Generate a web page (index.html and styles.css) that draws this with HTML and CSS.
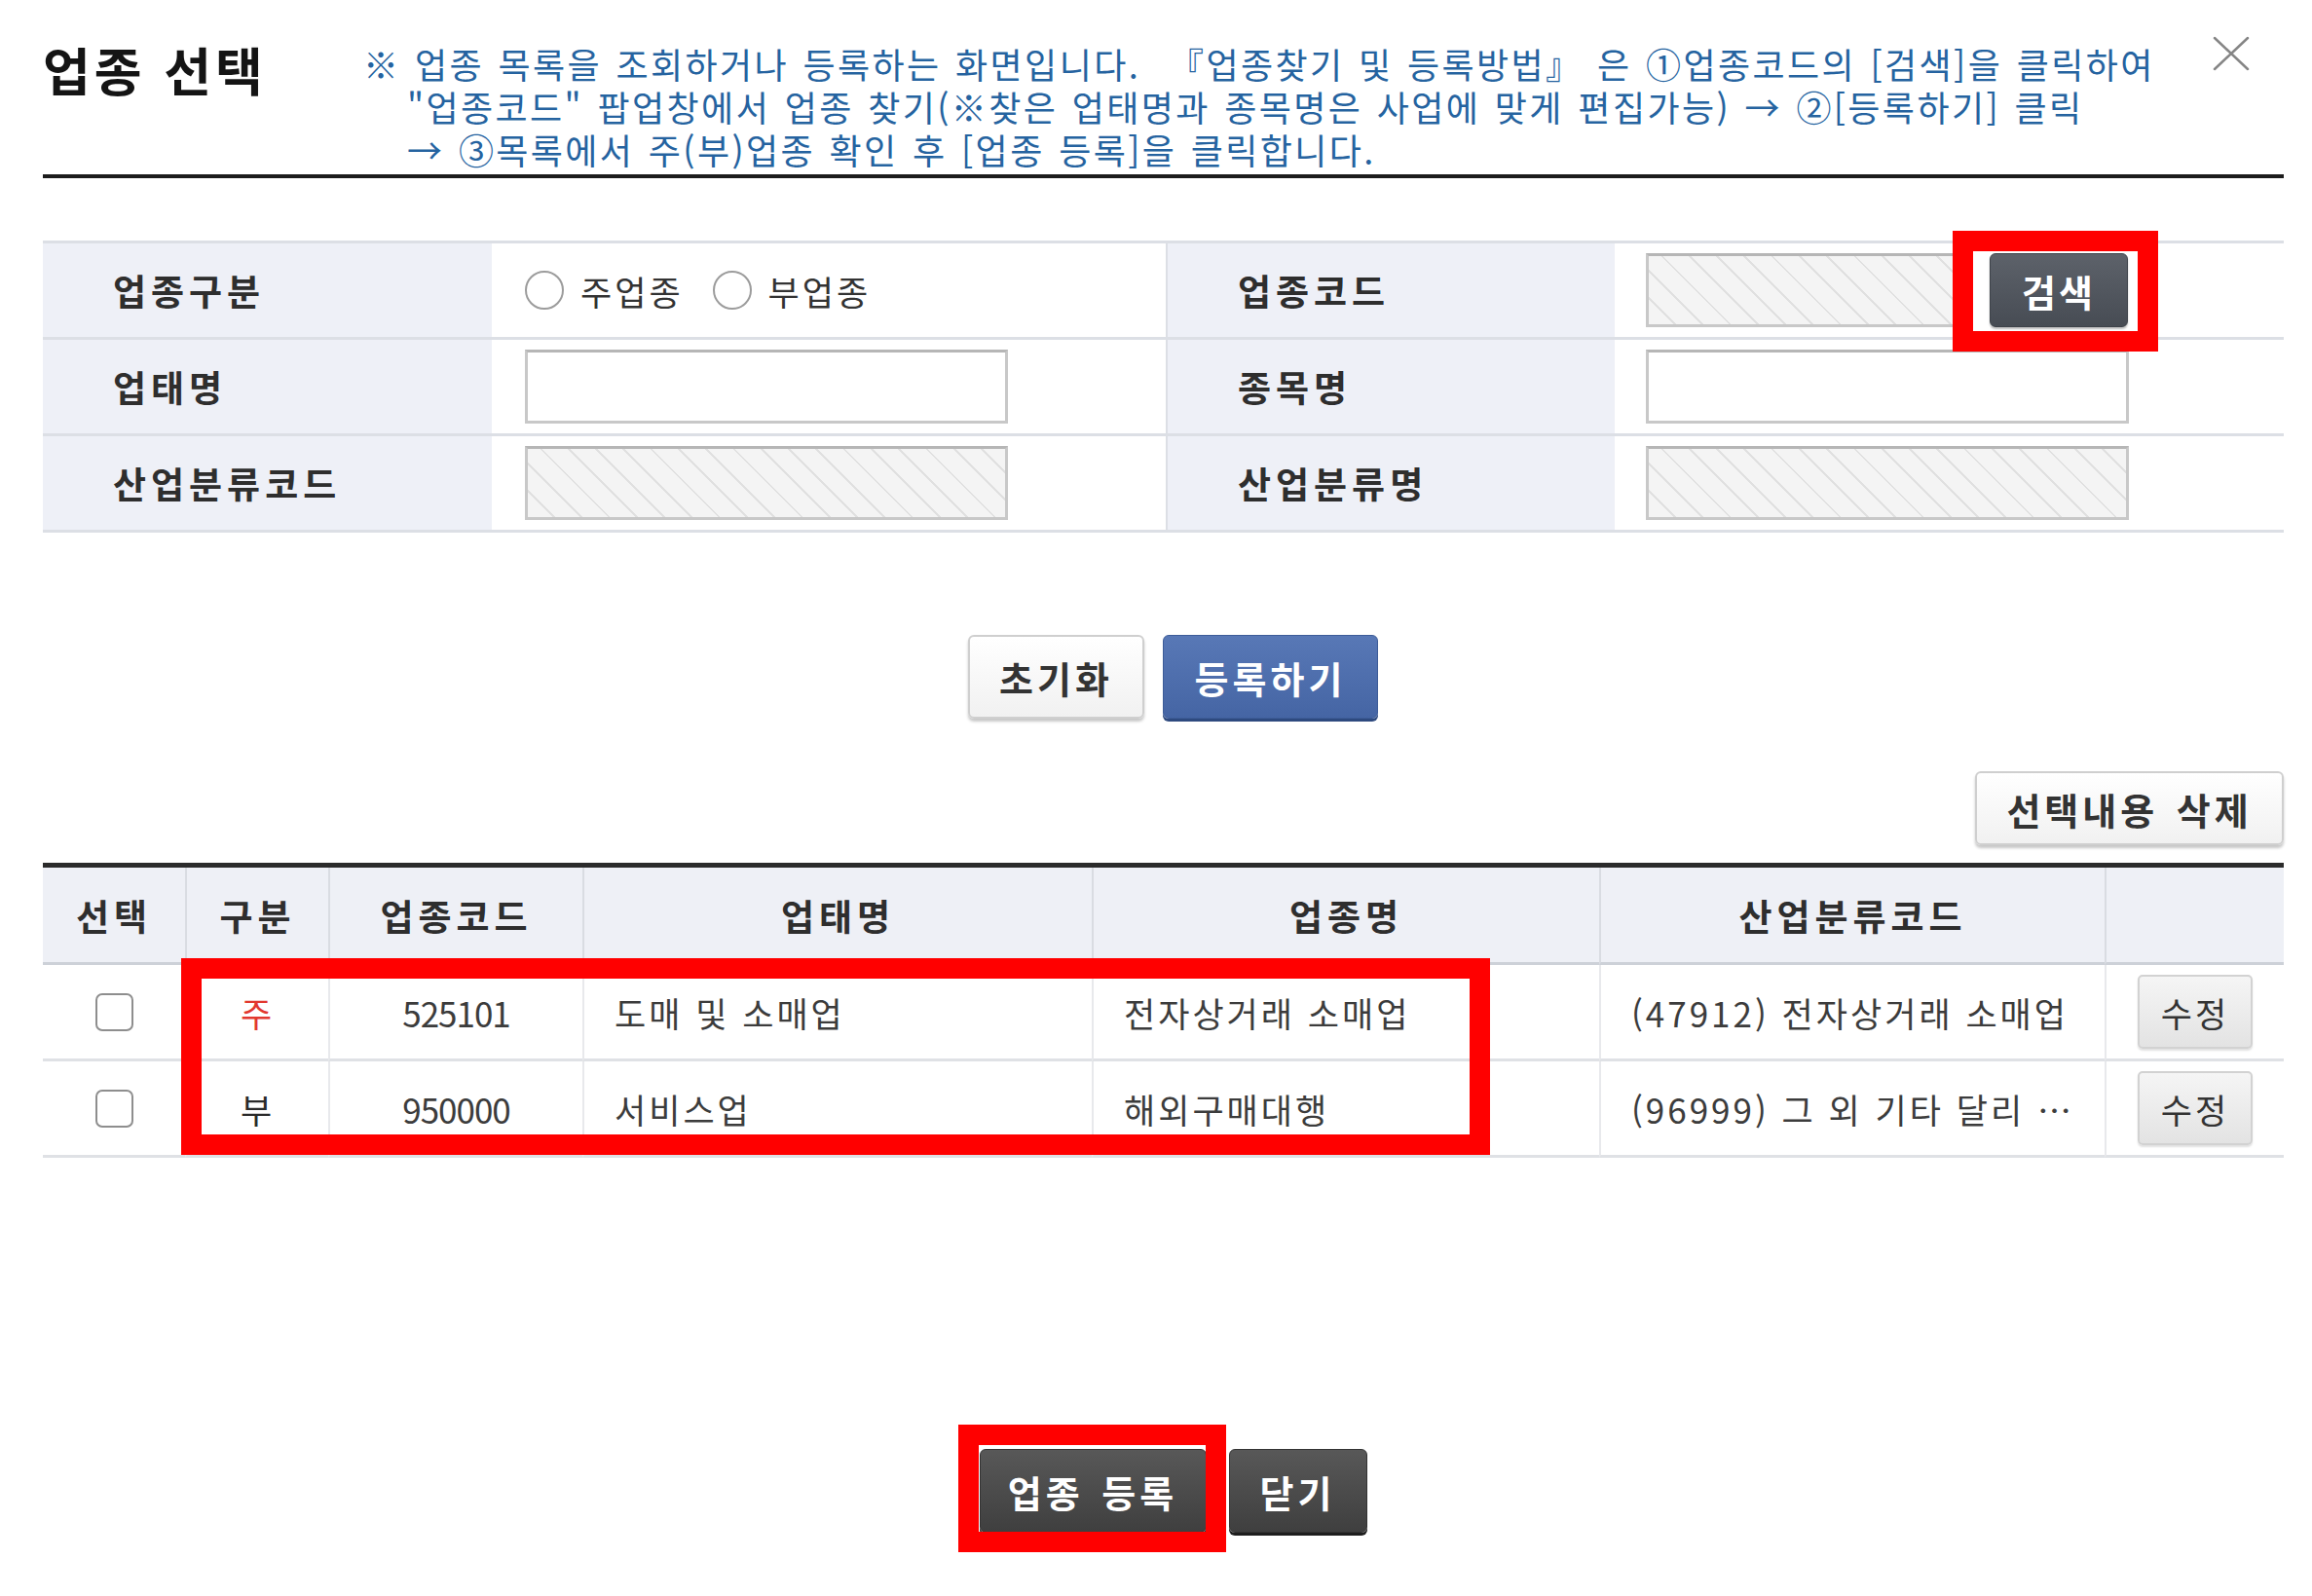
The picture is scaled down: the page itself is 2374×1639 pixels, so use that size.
FILE: index.html
```html
<!DOCTYPE html>
<html lang="ko">
<head>
<meta charset="utf-8">
<title>업종 선택</title>
<link rel="stylesheet" href="styles.css">
</head>
<body>
<div class="popup">
  <header class="head">
    <h1 class="title">업종 선택</h1>
    <p class="guide">
      <span class="line first">※ 업종 목록을 조회하거나 등록하는 화면입니다. &nbsp;『업종찾기 및 등록방법』 은 ①업종코드의 [검색]을 클릭하여</span>
      <span class="line">"업종코드" 팝업창에서 업종 찾기(※찾은 업태명과 종목명은 사업에 맞게 편집가능) → ②[등록하기] 클릭</span>
      <span class="line">→ ③목록에서 주(부)업종 확인 후 [업종 등록]을 클릭합니다.</span>
    </p>
    <button class="close" type="button" aria-label="닫기">
      <svg width="38" height="36" viewBox="0 0 38 36"><path d="M2 2 L36 34 M36 2 L2 34" stroke="#858585" stroke-width="2.5" fill="none" stroke-linecap="round"/></svg>
    </button>
  </header>

  <section class="form">
    <div class="th">업종구분</div>
    <div class="td">
      <label class="radio"><input type="radio" name="kind">주업종</label>
      <label class="radio"><input type="radio" name="kind">부업종</label>
    </div>
    <div class="th th2">업종코드</div>
    <div class="td td2">
      <input class="field hatch code" type="text" readonly>
      <button class="btn-search mark-a" type="button">검색</button>
    </div>

    <div class="th">업태명</div>
    <div class="td"><input class="field" type="text"></div>
    <div class="th th2">종목명</div>
    <div class="td td2"><input class="field" type="text"></div>

    <div class="th">산업분류코드</div>
    <div class="td"><input class="field hatch" type="text" readonly></div>
    <div class="th th2">산업분류명</div>
    <div class="td td2"><input class="field hatch" type="text" readonly></div>
  </section>

  <div class="actions">
    <button class="btn btn-light reset" type="button">초기화</button>
    <button class="btn btn-blue add" type="button">등록하기</button>
  </div>

  <div class="tools">
    <button class="btn btn-light del" type="button">선택내용 삭제</button>
  </div>

  <div class="list-wrap">
    <div class="list">
      <div class="c h">선택</div>
      <div class="c h">구분</div>
      <div class="c h">업종코드</div>
      <div class="c h">업태명</div>
      <div class="c h">업종명</div>
      <div class="c h">산업분류코드</div>
      <div class="c h"></div>

      <div class="c center"><input class="chk" type="checkbox"></div>
      <div class="c center main">주</div>
      <div class="c center num">525101</div>
      <div class="c">도매 및 소매업</div>
      <div class="c">전자상거래 소매업</div>
      <div class="c">(47912) 전자상거래 소매업</div>
      <div class="c center"><button class="btn-edit" type="button">수정</button></div>

      <div class="c center"><input class="chk" type="checkbox"></div>
      <div class="c center sub">부</div>
      <div class="c center num">950000</div>
      <div class="c">서비스업</div>
      <div class="c">해외구매대행</div>
      <div class="c">(96999) 그 외 기타 달리 …</div>
      <div class="c center"><button class="btn-edit" type="button">수정</button></div>
    </div>
    <div class="mark-rows"></div>
  </div>

  <div class="final">
    <button class="btn btn-dark reg mark-b" type="button">업종 등록</button>
    <button class="btn btn-dark shut" type="button">닫기</button>
  </div>
</div>
</body>
</html>
```

FILE: styles.css
```css
* {
  box-sizing: border-box;
  margin: 0;
  padding: 0;
}

html, body {
  background: #ffffff;
}

body {
  font-family: "Noto Sans CJK KR", "Noto Sans", sans-serif;
  font-size: 35px;
  color: #3c3c3c;
  word-spacing: 0.1em;
}

button, input {
  font-family: inherit;
}

.popup {
  padding: 0 29px 40px 44px;
}

/* ---------- header ---------- */
.head {
  display: flex;
  align-items: flex-start;
  padding-top: 43px;
  padding-bottom: 4px;
  border-bottom: 4px solid #1c1c1c;
}

.title {
  width: 329px;
  flex: none;
  margin-top: 2px;
  font-size: 53px;
  line-height: 52px;
  font-weight: 700;
  color: #141414;
  letter-spacing: 4px;
  word-spacing: 0;
}

.guide {
  font-size: 36px;
  line-height: 44px;
  color: #2563a0;
  letter-spacing: 2.4px;
  word-spacing: 2px;
  white-space: nowrap;
}

.guide .line {
  display: block;
  padding-left: 45px;
}

.guide .first {
  padding-left: 0;
}

.close {
  margin-left: auto;
  margin-top: -6px;
  margin-right: 35px;
  width: 38px;
  height: 36px;
  border: 0;
  background: none;
  display: flex;
}

/* ---------- search form ---------- */
.form {
  margin-top: 64px;
  display: grid;
  grid-template-columns: 461px 692px 461px 1fr;
  border-top: 3px solid #dcdfe5;
}

.form .th,
.form .td {
  height: 99px;
  border-bottom: 3px solid #dcdfe5;
  display: flex;
  align-items: center;
}

.form .th {
  background: #eef0f7;
  padding-left: 72px;
  font-weight: 700;
  font-size: 37px;
  color: #2e2e2e;
  letter-spacing: 5px;
}

.form .th2 {
  border-left: 2px solid #dcdfe5;
}

.form .td {
  padding-left: 34px;
}

.form .td2 {
  padding-left: 32px;
}

.radio {
  display: flex;
  align-items: center;
  gap: 17px;
  margin-right: 30px;
  color: #333333;
  letter-spacing: 3px;
}

.radio input {
  appearance: none;
  -webkit-appearance: none;
  width: 40px;
  height: 40px;
  border: 2.5px solid #9c9c9c;
  border-radius: 50%;
  background: #ffffff;
  margin: 0;
}

.field {
  width: 496px;
  height: 76px;
  border: 3px solid #c8c8c8;
  border-top-color: #b6b6b6;
  background: #ffffff;
  font-size: 35px;
  padding: 0 12px;
  outline: none;
}

.hatch {
  background: repeating-linear-gradient(45deg, #f4f4f4 0 18px, #e0e0e0 18px 20px);
}

.code {
  width: 322px;
}

.btn-search {
  position: relative;
  margin-left: 31px;
  width: 142px;
  height: 76px;
  border: 1px solid #3e434a;
  border-radius: 6px;
  background: linear-gradient(#5d626a, #474c54);
  color: #ffffff;
  font-size: 38px;
  font-weight: 700;
  letter-spacing: 3px;
  box-shadow: 0 2px 2px rgba(0, 0, 0, 0.25);
}

/* ---------- red annotation frames ---------- */
.mark-a::after,
.mark-b::after {
  content: "";
  position: absolute;
  border: 21px solid #ff0000;
  pointer-events: none;
}

.mark-a::after {
  top: -24px;
  left: -39px;
  right: -32px;
  bottom: -26px;
}

.mark-b::after {
  top: -26px;
  left: -23px;
  right: -21px;
  bottom: -21px;
}

.mark-rows {
  position: absolute;
  left: 142px;
  top: 98px;
  width: 1344px;
  height: 202px;
  border: 21px solid #ff0000;
  pointer-events: none;
}

/* ---------- buttons ---------- */
.btn {
  position: relative;
  height: 86px;
  border-radius: 6px;
  font-size: 38px;
  font-weight: 700;
  letter-spacing: 4px;
  word-spacing: 0.1em;
  cursor: pointer;
}

.btn-light {
  background: linear-gradient(#ffffff, #f1f1f1);
  border: 2px solid #cfcfcf;
  color: #333333;
  box-shadow: 0 3px 3px rgba(0, 0, 0, 0.22);
}

.btn-blue {
  background: linear-gradient(#5878b6, #4565a4);
  border: 1px solid #3d5c98;
  color: #ffffff;
  box-shadow: 0 3px 0 #2e4a7f;
}

.btn-dark {
  background: linear-gradient(#585858, #3f3f3f);
  border: 1px solid #333333;
  color: #ffffff;
  box-shadow: 0 3px 0 #1e1e1e;
}

.actions {
  display: flex;
  justify-content: center;
  gap: 19px;
  padding-left: 20px;
  margin-top: 105px;
}

.reset { width: 181px; }
.add { width: 221px; }

.tools {
  display: flex;
  justify-content: flex-end;
  margin-top: 54px;
}

.del {
  width: 317px;
  height: 76px;
}

/* ---------- list ---------- */
.list-wrap {
  position: relative;
  margin-top: 18px;
}

.list {
  display: grid;
  grid-template-columns: 146px 147px 261px 523px 521px 519px 1fr;
  border-top: 5px solid #2b2b2b;
}

.list .c {
  display: flex;
  align-items: center;
  height: 99px;
  padding-left: 31px;
  border-bottom: 3px solid #dfe1e5;
  border-left: 2px solid #e8e9ec;
  white-space: nowrap;
  overflow: hidden;
  letter-spacing: 3px;
  word-spacing: 0;
}

.list .c:nth-child(7n+1) {
  border-left: 0;
}

.list .h {
  height: 100px;
  justify-content: center;
  padding-left: 0;
  background: #eef0f6;
  font-weight: 700;
  font-size: 37px;
  color: #2e2e2e;
  border-bottom-color: #cdd1d8;
  border-left-color: #d9dce2;
  letter-spacing: 5px;
}

.list .center {
  justify-content: center;
  padding-left: 0;
}

.list .num {
  letter-spacing: -1px;
}

.main {
  color: #e2382f;
}

.sub {
  color: #2a2a2a;
}

.chk {
  appearance: none;
  -webkit-appearance: none;
  width: 39px;
  height: 39px;
  margin: 0;
  border: 2.5px solid #8e8e8e;
  border-radius: 7px;
  background: #ffffff;
}

.btn-edit {
  width: 118px;
  height: 76px;
  border: 2px solid #d2d2d2;
  border-radius: 5px;
  background: linear-gradient(#f5f5f5, #e3e3e3);
  color: #333333;
  font-size: 35px;
  letter-spacing: 3px;
  box-shadow: 0 2px 2px rgba(0, 0, 0, 0.12);
}

/* ---------- bottom ---------- */
.final {
  display: flex;
  justify-content: center;
  gap: 23px;
  padding-left: 20px;
  margin-top: 299px;
}

.reg { width: 233px; }
.shut { width: 142px; }
```
